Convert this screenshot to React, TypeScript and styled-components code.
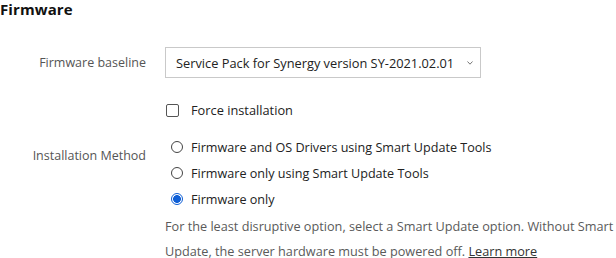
import React, { useState } from "react";
import styled, { createGlobalStyle, css } from "styled-components";

const GlobalStyle = createGlobalStyle`
  html, body {
    margin: 0;
    padding: 0;
    background: #fff;
  }
  body {
    font-family: "Open Sans", "Liberation Sans", sans-serif;
    color: #333;
  }
`;

const Page = styled.div`
  width: 616px;
  height: 258px;
  overflow: hidden;
`;

const Title = styled.h2`
  margin: 0;
  padding-top: 1px;
  font-size: 15px;
  line-height: 16px;
  font-weight: 700;
  color: #111;
  letter-spacing: 0.1px;
`;

const Form = styled.div`
  display: grid;
  grid-template-columns: 146px 1fr;
  column-gap: 19px;
  margin-top: 30px;
`;

const Label = styled.div<{ $offset?: number }>`
  text-align: right;
  font-size: 12.5px;
  color: #555;
  line-height: 31px;
  padding-top: ${(p) => p.$offset || 0}px;
`;

const Cell = styled.div`
  display: flex;
  flex-direction: column;
`;

const SelectBox = styled.div`
  width: 316px;
  height: 31px;
  box-sizing: border-box;
  border: 1px solid #c9c9c9;
  display: flex;
  align-items: center;
  justify-content: space-between;
  padding: 0 6px 0 10px;
  font-size: 12.8px;
  color: #222;
`;

const Chevron = styled.svg`
  width: 8px;
  height: 6px;
`;

const CheckRow = styled.label`
  display: flex;
  align-items: center;
  gap: 12px;
  margin-top: 20px;
  height: 24px;
  font-size: 12.8px;
  color: #222;
`;

const Box = styled.span`
  width: 11px;
  height: 11px;
  border: 1px solid #555;
  border-radius: 2px;
  margin-left: 1px;
`;

const Radios = styled.div`
  display: flex;
  flex-direction: column;
  padding-top: 12px;
`;

const RadioRow = styled.label`
  display: flex;
  align-items: center;
  gap: 8px;
  height: 26px;
  padding-left: 6px;
  font-size: 12.6px;
  color: #222;
`;

const Dot = styled.span<{ $on?: boolean }>`
  width: 10px;
  height: 10px;
  border-radius: 50%;
  border: 1px solid #444;
  box-sizing: content-box;
  ${(p) =>
    p.$on &&
    css`
      border-color: #0f5fd6;
      background: radial-gradient(circle, #0f5fd6 0 3.6px, #fff 4.2px);
    `}
`;

const Help = styled.div`
  display: flex;
  flex-direction: column;
  gap: 9px;
  margin-top: 6px;
  font-size: 12.7px;
  line-height: 16px;
  color: #5a5a5a;
  white-space: nowrap;

  a {
    color: #333;
    text-decoration: underline;
  }
`;

const options = [
  "Firmware and OS Drivers using Smart Update Tools",
  "Firmware only using Smart Update Tools",
  "Firmware only",
];

export default function App() {
  const [method] = useState(2);
  return (
    <Page>
      <GlobalStyle />
      <Title>Firmware</Title>
      <Form>
        <Label>Firmware baseline</Label>
        <Cell>
          <SelectBox>
            <span>Service Pack for Synergy version SY-2021.02.01</span>
            <Chevron viewBox="0 0 8 6">
              <path d="M1.5 1.5 L4 4.2 L6.5 1.5" fill="none" stroke="#777" strokeWidth="1" />
            </Chevron>
          </SelectBox>
          <CheckRow>
            <Box />
            Force installation
          </CheckRow>
        </Cell>
        <Label $offset={18}>Installation Method</Label>
        <Cell>
          <Radios>
            {options.map((o, i) => (
              <RadioRow key={o}>
                <Dot $on={i === method} />
                {o}
              </RadioRow>
            ))}
          </Radios>
          <Help>
            <span>For the least disruptive option, select a Smart Update option. Without Smart</span>
            <span>
              Update, the server hardware must be powered off. <a>Learn more</a>
            </span>
          </Help>
        </Cell>
      </Form>
    </Page>
  );
}
